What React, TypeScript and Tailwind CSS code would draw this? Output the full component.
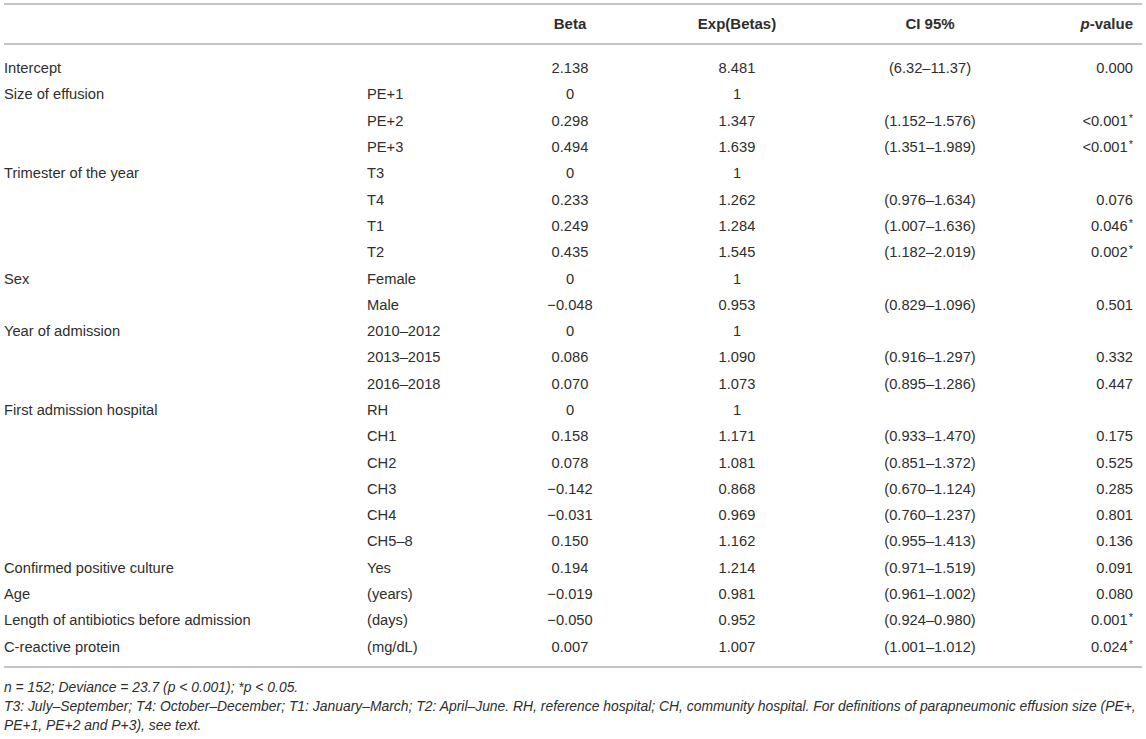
import React from "react";

type Row = [string, string, string, string, string, string];

const rows: Row[] = [
  ["Intercept", "", "2.138", "8.481", "(6.32–11.37)", "0.000"],
  ["Size of effusion", "PE+1", "0", "1", "", ""],
  ["", "PE+2", "0.298", "1.347", "(1.152–1.576)", "<0.001*"],
  ["", "PE+3", "0.494", "1.639", "(1.351–1.989)", "<0.001*"],
  ["Trimester of the year", "T3", "0", "1", "", ""],
  ["", "T4", "0.233", "1.262", "(0.976–1.634)", "0.076"],
  ["", "T1", "0.249", "1.284", "(1.007–1.636)", "0.046*"],
  ["", "T2", "0.435", "1.545", "(1.182–2.019)", "0.002*"],
  ["Sex", "Female", "0", "1", "", ""],
  ["", "Male", "−0.048", "0.953", "(0.829–1.096)", "0.501"],
  ["Year of admission", "2010–2012", "0", "1", "", ""],
  ["", "2013–2015", "0.086", "1.090", "(0.916–1.297)", "0.332"],
  ["", "2016–2018", "0.070", "1.073", "(0.895–1.286)", "0.447"],
  ["First admission hospital", "RH", "0", "1", "", ""],
  ["", "CH1", "0.158", "1.171", "(0.933–1.470)", "0.175"],
  ["", "CH2", "0.078", "1.081", "(0.851–1.372)", "0.525"],
  ["", "CH3", "−0.142", "0.868", "(0.670–1.124)", "0.285"],
  ["", "CH4", "−0.031", "0.969", "(0.760–1.237)", "0.801"],
  ["", "CH5–8", "0.150", "1.162", "(0.955–1.413)", "0.136"],
  ["Confirmed positive culture", "Yes", "0.194", "1.214", "(0.971–1.519)", "0.091"],
  ["Age", "(years)", "−0.019", "0.981", "(0.961–1.002)", "0.080"],
  ["Length of antibiotics before admission", "(days)", "−0.050", "0.952", "(0.924–0.980)", "0.001*"],
  ["C-reactive protein", "(mg/dL)", "0.007", "1.007", "(1.001–1.012)", "0.024*"],
];

const cols = "grid grid-cols-[359px_127px_160px_174px_212px_106px]";

function PVal({ v }: { v: string }) {
  if (v.endsWith("*")) {
    return (
      <span>
        {v.slice(0, -1)}
        <span className="text-[11px] relative top-[-4px] ml-[1px]">*</span>
      </span>
    );
  }
  return <span>{v}</span>;
}

export default function App() {
  return (
    <div
      className="bg-white w-[1146px] h-[739px] pl-[4px] pt-[3px] text-[#2e2e2e]"
      style={{ fontFamily: '"Liberation Sans", Arial, sans-serif' }}
    >
      <div className="w-[1138px]">
        <div className={`${cols} h-[42px] items-center border-t-2 border-b-2 border-[#c4c4c4] text-[15px] font-bold`}>
          <div />
          <div />
          <div className="text-center">Beta</div>
          <div className="text-center">Exp(Betas)</div>
          <div className="text-center">CI 95%</div>
          <div className="text-right pr-[9px]">
            <span className="italic">p</span>-value
          </div>
        </div>
        <div className="pt-[10px] pb-[6px] border-b-2 border-[#c4c4c4] text-[14.7px]">
          {rows.map((r, i) => (
            <div key={i} className={`${cols} h-[26.3px] items-center`}>
              <div>{r[0]}</div>
              <div className="pl-[4px]">{r[1]}</div>
              <div className="text-center">{r[2]}</div>
              <div className="text-center">{r[3]}</div>
              <div className="text-center">{r[4]}</div>
              <div className="text-right pr-[9px]">
                <PVal v={r[5]} />
              </div>
            </div>
          ))}
        </div>
        <div className="pt-[10px] text-[13.9px] italic leading-[19px]">
          <div>n = 152; Deviance = 23.7 (p &lt; 0.001); *p &lt; 0.05.</div>
          <div className="whitespace-nowrap">
            T3: July–September; T4: October–December; T1: January–March; T2: April–June. RH, reference hospital; CH, community hospital. For definitions of parapneumonic effusion size (PE+,
          </div>
          <div>PE+1, PE+2 and P+3), see text.</div>
        </div>
      </div>
    </div>
  );
}
